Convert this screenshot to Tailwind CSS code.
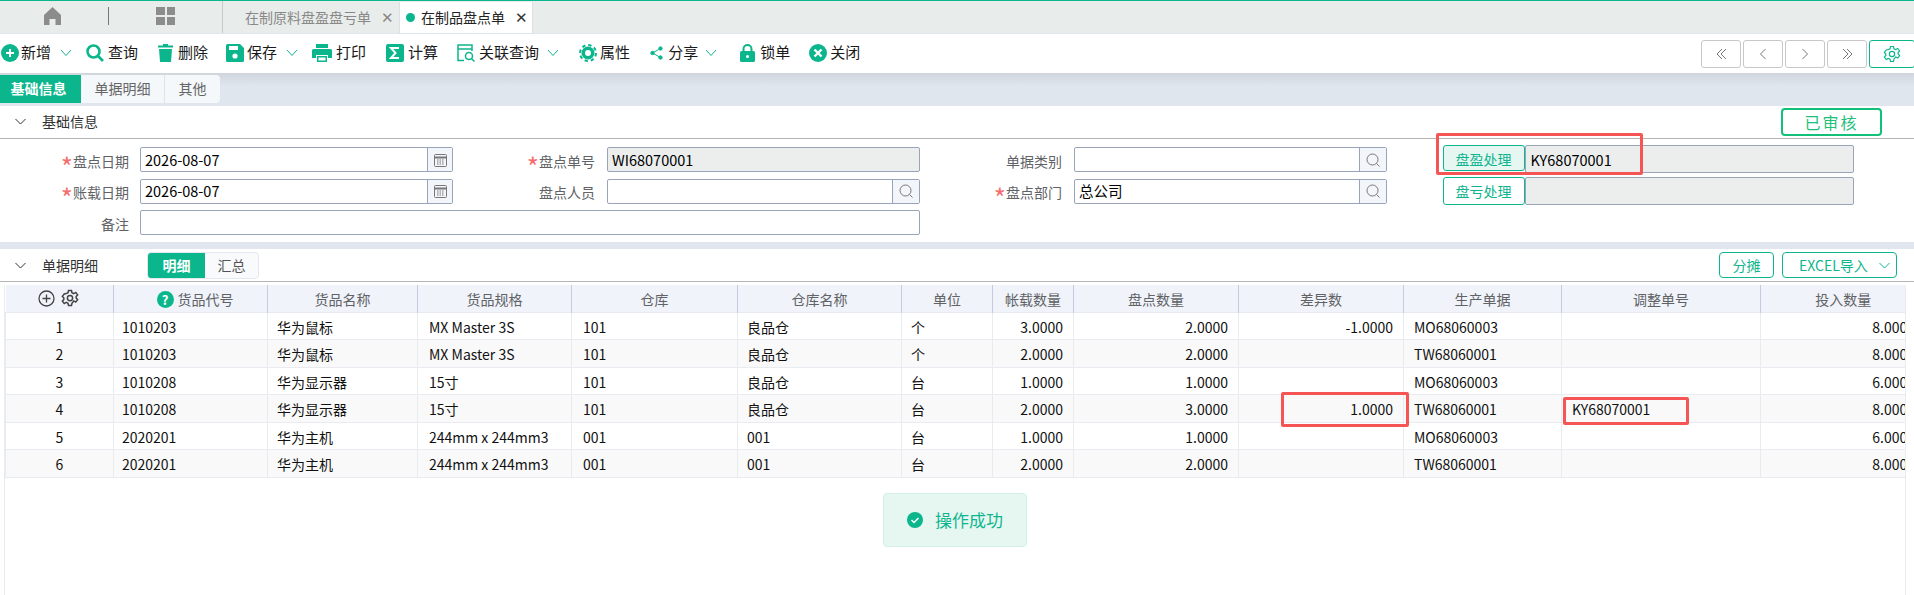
<!DOCTYPE html>
<html lang="zh">
<head>
    <meta charset="UTF-8">
    <title>在制品盘点单</title>
    <script src="https://cdn.jsdelivr.net/npm/@tailwindcss/browser@4"></script>
</head>
<body class="relative h-[595px] w-[1914px] overflow-hidden bg-white font-['Noto_Sans_CJK_SC','Noto_Sans',sans-serif] text-[14px] text-[#111]">

    <!-- 顶部页签 -->
    <div class="h-[33px] border-t border-[#0cb68c] bg-[#e8ecea] flex">
        <div class="w-[222px] flex items-center pb-[2px]">
            <svg class="ml-[44px] w-[17px] h-[18px]" viewBox="0 0 17 18" fill="#8c8c8c"><path d="M8.5 0 17 8v10h-5.500v-6h-6v6H0V8z"/></svg>
            <div class="ml-[47px] w-px h-[18px] bg-[#777]"></div>
            <div class="ml-[47px] grid grid-cols-2 gap-[2px] w-[19px] h-[18px]">
                <div class="bg-[#8c8c8c]"></div><div class="bg-[#8c8c8c]"></div><div class="bg-[#8c8c8c]"></div><div class="bg-[#8c8c8c]"></div>
            </div>
        </div>
        <div class="w-[177px] border-l border-[#c9c9c9] flex items-center pl-[22px] text-[#888]">
            <span>在制原料盘盈盘亏单</span>
            <span class="ml-[10px] text-[15px] font-light">✕</span>
        </div>
        <div class="w-[134px] mt-px bg-white border-x border-[#dcdfe6] flex items-center pl-[6px]">
            <span class="w-[9px] h-[9px] rounded-full bg-[#0cb68c]"></span>
            <span class="ml-[6px] text-[#222]">在制品盘点单</span>
            <span class="ml-[10px] text-[15px] font-light text-[#333]">✕</span>
        </div>
    </div>

    <!-- 工具栏 -->
    <div class="h-[40px] border-t border-[#dfe5ec] pb-[2px] flex items-center text-[15px] text-[#1a1a1a] relative">
        <div class="flex items-center">
            <svg class="ml-px w-[18px] h-[18px]" viewBox="0 0 18 18"><circle cx="9" cy="9" r="9" fill="#0cb68c"/><path d="M9 5v8M5 9h8" stroke="#fff" stroke-width="2"/></svg>
            <span class="ml-[2px]">新增</span>
            <svg class="ml-[9px] w-[12px] h-[8px]" viewBox="0 0 12 8" fill="none" stroke="#0cb68c"><path d="m1 1 5 5.500 5-5.500"/></svg>

            <svg class="ml-[14px] w-[18px] h-[18px]" viewBox="0 0 18 18" fill="none" stroke="#0cb68c" stroke-width="2.600"><circle cx="7.500" cy="7.500" r="6"/><path d="m12 12 5 5"/></svg>
            <span class="ml-[4px]">查询</span>

            <svg class="ml-[20px] w-[15px] h-[18px]" viewBox="0 0 15 18" fill="#0cb68c"><path d="M5 0h5v1.500h5V3.500H0V1.500h5zM1 5h13l-1 13H2z"/></svg>
            <span class="ml-[5px]">删除</span>

            <svg class="ml-[18px] w-[18px] h-[18px]" viewBox="0 0 18 18"><path fill="#0cb68c" d="M0 1.500A1.500 1.500 0 0 1 1.500 0H14l4 4v12.500a1.500 1.500 0 0 1-1.500 1.500h-15A1.500 1.500 0 0 1 0 16.500z"/><rect x="3" y="2" width="9" height="4" fill="#fff"/><circle cx="9" cy="12" r="2.600" fill="#fff"/></svg>
            <span class="ml-[3px]">保存</span>
            <svg class="ml-[9px] w-[12px] h-[8px]" viewBox="0 0 12 8" fill="none" stroke="#0cb68c"><path d="m1 1 5 5.500 5-5.500"/></svg>

            <svg class="ml-[14px] w-[20px] h-[18px]" viewBox="0 0 20 18"><path fill="#0cb68c" d="M4 0h12v4H4zM1.500 5h17A1.500 1.500 0 0 1 20 6.500V14h-4v-3H4v3H0V6.500A1.500 1.500 0 0 1 1.500 5zM5 12h10v6H5z"/><rect x="6.500" y="13.500" width="7" height="3" fill="#fff"/></svg>
            <span class="ml-[4px]">打印</span>

            <svg class="ml-[20px] w-[18px] h-[18px]" viewBox="0 0 18 18"><rect width="18" height="18" rx="2" fill="#0cb68c"/><path d="M13 4H5l4.500 5L5 14h8" fill="none" stroke="#fff" stroke-width="2"/></svg>
            <span class="ml-[4px]">计算</span>

            <svg class="ml-[19px] w-[18px] h-[18px]" viewBox="0 0 18 18" fill="none" stroke="#0cb68c" stroke-width="1.500"><path d="M7 16.500H1V1h14v6M1 5h14"/><circle cx="12" cy="12" r="3.500"/><path d="m14.500 14.500 3 3"/></svg>
            <span class="ml-[4px]">关联查询</span>
            <svg class="ml-[8px] w-[12px] h-[8px]" viewBox="0 0 12 8" fill="none" stroke="#0cb68c"><path d="m1 1 5 5.500 5-5.500"/></svg>

            <svg class="ml-[20px] w-[18px] h-[18px]" viewBox="0 0 18 18"><circle cx="9" cy="9" r="6.500" fill="#0cb68c"/><circle cx="9" cy="9" r="8" fill="none" stroke="#0cb68c" stroke-width="2" stroke-dasharray="3.400 2.880"/><circle cx="9" cy="9" r="3" fill="#fff"/></svg>
            <span class="ml-[3px]">属性</span>

            <svg class="ml-[20px] w-[13px] h-[14px]" viewBox="0 0 13 14" fill="#0cb68c" stroke="#0cb68c"><path d="M10.500 2.500 2.500 7l8 4.500" fill="none"/><circle cx="10.500" cy="2.500" r="1.700"/><circle cx="2.500" cy="7" r="1.700"/><circle cx="10.500" cy="11.500" r="1.700"/></svg>
            <span class="ml-[5px]">分享</span>
            <svg class="ml-[7px] w-[12px] h-[8px]" viewBox="0 0 12 8" fill="none" stroke="#0cb68c"><path d="m1 1 5 5.500 5-5.500"/></svg>

            <svg class="ml-[23px] w-[15px] h-[18px]" viewBox="0 0 15 18"><path d="M3.500 8V5a4 4 0 0 1 8 0v3" fill="none" stroke="#0cb68c" stroke-width="2"/><rect y="7" width="15" height="11" rx="1.500" fill="#0cb68c"/><circle cx="7.500" cy="12.500" r="1.500" fill="#fff"/></svg>
            <span class="ml-[5px]">锁单</span>

            <svg class="ml-[19px] w-[18px] h-[18px]" viewBox="0 0 18 18"><circle cx="9" cy="9" r="9" fill="#0cb68c"/><path d="m5.500 5.500 7 7m0-7-7 7" stroke="#fff" stroke-width="2.400"/></svg>
            <span class="ml-[3px]">关闭</span>
        </div>
        <div class="absolute left-[1701px] top-[6px] flex gap-[2px]">
            <div class="w-[40px] h-[28px] border border-[#c8c8c8] rounded-[3px] flex items-center justify-center"><svg class="w-[11px] h-[12px]" viewBox="0 0 11 12" fill="none" stroke="#777"><path d="M6 1 1 6l5 5M10 1 5 6l5 5"/></svg></div>
            <div class="w-[40px] h-[28px] border border-[#c8c8c8] rounded-[3px] flex items-center justify-center"><svg class="w-[6px] h-[12px]" viewBox="0 0 6 12" fill="none" stroke="#777"><path d="M5.500 1 .5 6l5 5"/></svg></div>
            <div class="w-[40px] h-[28px] border border-[#c8c8c8] rounded-[3px] flex items-center justify-center"><svg class="w-[6px] h-[12px]" viewBox="0 0 6 12" fill="none" stroke="#777"><path d="m.5 1 5 5-5 5"/></svg></div>
            <div class="w-[40px] h-[28px] border border-[#c8c8c8] rounded-[3px] flex items-center justify-center"><svg class="w-[11px] h-[12px]" viewBox="0 0 11 12" fill="none" stroke="#777"><path d="m1 1 5 5-5 5M5 1l5 5-5 5"/></svg></div>
            <div class="w-[46px] h-[28px] border border-[#0cb68c] rounded-[3px] flex items-center justify-center"><svg class="w-[18px] h-[18px]" viewBox="0 0 24 24" fill="none" stroke="#0cb68c" stroke-width="1.600"><circle cx="12" cy="12" r="3.500"/><path d="M10 2h4l.6 3 2.400 1.100 2.700-1.500 2.500 3.200-2 2.200v2l2 2.200-2.500 3.200-2.700-1.500L14.600 19 14 22h-4l-.6-3L7 17.900l-2.700 1.500-2.500-3.200 2-2.200v-2l-2-2.200 2.500-3.200L7 6.100 9.400 5z"/></svg></div>
        </div>
    </div>

    <!-- 页面页签 -->
    <div class="h-[33px] bg-gradient-to-b from-[#d0d5de] to-[#e0e6ee] to-40% pt-[2px]">
        <div class="flex h-[28px] w-[220px] rounded-r-[4px] bg-[#f5f8fb] text-[#666]">
            <div class="w-[81px] bg-[#0cb68c] text-white font-bold flex items-center justify-center pb-[2px] pr-[4px]">基础信息</div>
            <div class="w-[84px] border-r border-[#e0e4ea] flex items-center justify-center pb-[2px]">单据明细</div>
            <div class="flex-1 flex items-center justify-center pb-[2px]">其他</div>
        </div>
    </div>

    <!-- 基础信息 -->
    <div class="relative h-[33px] border-b border-[#b5b5b5] pb-[2px] flex items-center">
        <svg class="ml-[15px] w-[11px] h-[7px]" viewBox="0 0 11 7" fill="none" stroke="#333"><path d="m.5 1 5 5 5-5"/></svg>
        <span class="ml-[16px] text-[#333]">基础信息</span>
        <div class="absolute left-[1781px] top-[2px] w-[101px] h-[28px] border-2 border-[#13c07a] rounded-[4px] flex items-center justify-center text-[16px] text-[#1fc07a] tracking-[2px]">已审核</div>
    </div>

    <div class="h-[103px] pt-[8px] grid grid-cols-[140px_313px_154px_313px_154px_313px_55.500px_82px_329px] grid-rows-[25px_25px_25px] gap-y-[6.500px] text-[#606266]">
        <!-- 第一行 -->
        <div class="flex justify-end items-center pr-[11px] pt-[3px]"><span class="text-[#f56c6c] text-[26px] leading-none mt-[9px]">*</span>盘点日期</div>
        <div class="border border-[#98a4ba] rounded-[2px] flex items-center text-[14.500px] text-black"><span class="flex-1 pl-[4px]">2026-08-07</span><span class="w-[25px] h-full bg-[#f2f5fa] border-l border-[#98a4ba] flex items-center justify-center"><svg class="w-[13px] h-[14px]" viewBox="0 0 13 14" fill="none" stroke="#777"><rect x=".5" y="1.500" width="12" height="12" rx="1"/><path d="M.5 4.500h12" stroke-width="2"/><path d="M3 7h7M3 9h7M3 11h7" stroke-dasharray="1.500 1"/></svg></span></div>
        <div class="flex justify-end items-center pr-[12px] pt-[3px]"><span class="text-[#f56c6c] text-[26px] leading-none mt-[9px]">*</span>盘点单号</div>
        <div class="border border-[#98a4ba] rounded-[2px] bg-[#eceeee] flex items-center pl-[4px] text-[14.500px] text-black">WI68070001</div>
        <div class="flex justify-end items-center pr-[12px] pt-[3px]">单据类别</div>
        <div class="border border-[#98a4ba] rounded-[2px] flex justify-end"><span class="w-[27px] h-full bg-[#f2f5fa] border-l border-[#98a4ba] flex items-center justify-center"><svg class="w-[14px] h-[14px]" viewBox="0 0 14 14" fill="none" stroke="#777"><circle cx="6.500" cy="6.500" r="5.500"/><path d="m10.500 10.500 3 3"/></svg></span></div>
        <div></div>
        <div class="-mt-[2px] h-[26px] border border-[#0fb58e] rounded-[3px] bg-[#e6f7f2] text-[#0fb58e] flex items-center justify-center pt-[2px]">盘盈处理</div>
        <div class="-mt-[2px] h-[28px] border border-[#98a4ba] rounded-[2px] bg-[#eceeee] flex items-center pl-[5px] pt-[2px] text-[14.500px] text-black">KY68070001</div>

        <!-- 第二行 -->
        <div class="flex justify-end items-center pr-[11px] pt-[3px]"><span class="text-[#f56c6c] text-[26px] leading-none mt-[9px]">*</span>账载日期</div>
        <div class="border border-[#98a4ba] rounded-[2px] flex items-center text-[14.500px] text-black"><span class="flex-1 pl-[4px]">2026-08-07</span><span class="w-[25px] h-full bg-[#f2f5fa] border-l border-[#98a4ba] flex items-center justify-center"><svg class="w-[13px] h-[14px]" viewBox="0 0 13 14" fill="none" stroke="#777"><rect x=".5" y="1.500" width="12" height="12" rx="1"/><path d="M.5 4.500h12" stroke-width="2"/><path d="M3 7h7M3 9h7M3 11h7" stroke-dasharray="1.500 1"/></svg></span></div>
        <div class="flex justify-end items-center pr-[12px] pt-[3px]">盘点人员</div>
        <div class="border border-[#98a4ba] rounded-[2px] flex justify-end"><span class="w-[27px] h-full bg-[#f2f5fa] border-l border-[#98a4ba] flex items-center justify-center"><svg class="w-[14px] h-[14px]" viewBox="0 0 14 14" fill="none" stroke="#777"><circle cx="6.500" cy="6.500" r="5.500"/><path d="m10.500 10.500 3 3"/></svg></span></div>
        <div class="flex justify-end items-center pr-[12px] pt-[3px]"><span class="text-[#f56c6c] text-[26px] leading-none mt-[9px]">*</span>盘点部门</div>
        <div class="border border-[#98a4ba] rounded-[2px] flex items-center text-[14.500px] text-black"><span class="flex-1 pl-[4px]">总公司</span><span class="w-[27px] h-full bg-[#f2f5fa] border-l border-[#98a4ba] flex items-center justify-center"><svg class="w-[14px] h-[14px]" viewBox="0 0 14 14" fill="none" stroke="#777"><circle cx="6.500" cy="6.500" r="5.500"/><path d="m10.500 10.500 3 3"/></svg></span></div>
        <div></div>
        <div class="-mt-[2px] h-[28px] border border-[#0fb58e] rounded-[3px] text-[#0fb58e] flex items-center justify-center pt-[2px]">盘亏处理</div>
        <div class="-mt-[2px] h-[28px] border border-[#98a4ba] rounded-[2px] bg-[#eceeee]"></div>

        <!-- 第三行 -->
        <div class="flex justify-end items-center pr-[11px] pt-[3px]">备注</div>
        <div class="col-span-3 border border-[#98a4ba] rounded-[2px]"></div>
    </div>

    <div class="h-[7px] bg-[#e2e7ef]"></div>

    <!-- 单据明细 -->
    <div class="relative h-[33px] border-b border-[#b5b5b5] flex items-center">
        <svg class="ml-[15px] w-[11px] h-[7px]" viewBox="0 0 11 7" fill="none" stroke="#333"><path d="m.5 1 5 5 5-5"/></svg>
        <span class="ml-[16px] text-[#333]">单据明细</span>
        <div class="ml-[49px] flex h-[27px] w-[112px] border border-[#e3e8ee] rounded-[4px] overflow-hidden bg-[#f8fafc] text-[#555]">
            <div class="w-[57px] bg-[#0cb68c] text-white font-bold flex items-center justify-center">明细</div>
            <div class="flex-1 flex items-center justify-center">汇总</div>
        </div>
        <div class="absolute left-[1719px] top-[3px] w-[55px] h-[26px] border border-[#0fb58e] rounded-[4px] text-[#0fb58e] flex items-center justify-center">分摊</div>
        <div class="absolute left-[1782px] top-[3px] w-[115px] h-[26px] border border-[#0fb58e] rounded-[4px] text-[#0fb58e] flex items-center pl-[16px]">EXCEL导入<svg class="ml-[11px] w-[11px] h-[7px]" viewBox="0 0 11 7" fill="none" stroke="#0fb58e"><path d="m.5 1 5 5 5-5"/></svg></div>
    </div>

    <!-- 明细表格 -->
    <div class="mt-[3px] ml-[4px] w-[1902px] h-[310px] border-x border-[#e8ebf0] overflow-hidden">
        <table class="table-fixed w-[1920px] border-collapse">
            <colgroup>
                <col class="w-[108px]"><col class="w-[154px]"><col class="w-[150px]"><col class="w-[154px]"><col class="w-[166px]"><col class="w-[164px]"><col class="w-[91px]"><col class="w-[81px]"><col class="w-[165px]"><col class="w-[165px]"><col class="w-[158px]"><col class="w-[199px]"><col class="w-[165px]">
            </colgroup>
            <thead>
                <tr class="h-[27px] bg-[#f0f3f9] text-[#606266] font-normal">
                    <th class="font-normal border-r border-[#c5cbdc]"><div class="flex justify-center items-center gap-[6px] pr-[2px]">
                        <svg class="w-[17px] h-[17px]" viewBox="0 0 17 17" fill="none" stroke="#444" stroke-width="1.300"><circle cx="8.500" cy="8.500" r="7.500"/><path d="M8.500 4.500v8M4.500 8.500h8"/></svg>
                        <svg class="w-[18px] h-[18px]" viewBox="0 0 24 24" fill="none" stroke="#444" stroke-width="2"><circle cx="12" cy="12" r="3.500"/><path d="M10 2h4l.6 3 2.400 1.100 2.700-1.500 2.500 3.200-2 2.200v2l2 2.200-2.500 3.200-2.700-1.500L14.600 19 14 22h-4l-.6-3L7 17.900l-2.700 1.500-2.500-3.200 2-2.200v-2l-2-2.200 2.500-3.200L7 6.100 9.400 5z"/></svg>
                    </div></th>
                    <th class="font-normal border-r border-[#c5cbdc] pt-[2px]"><div class="flex justify-center items-center gap-[4px] pl-[9px]"><span class="w-[17px] h-[17px] shrink-0 rounded-full bg-[#0cb68c] text-white text-[13px] font-bold leading-[17px]">?</span>货品代号</div></th>
                    <th class="font-normal border-r border-[#c5cbdc] pt-[2px]">货品名称</th>
                    <th class="font-normal border-r border-[#c5cbdc] pt-[2px]">货品规格</th>
                    <th class="font-normal border-r border-[#c5cbdc] pt-[2px]">仓库</th>
                    <th class="font-normal border-r border-[#c5cbdc] pt-[2px]">仓库名称</th>
                    <th class="font-normal border-r border-[#c5cbdc] pt-[2px]">单位</th>
                    <th class="font-normal border-r border-[#c5cbdc] pt-[2px]">帐载数量</th>
                    <th class="font-normal border-r border-[#c5cbdc] pt-[2px]">盘点数量</th>
                    <th class="font-normal border-r border-[#c5cbdc] pt-[2px]">差异数</th>
                    <th class="font-normal border-r border-[#c5cbdc] pt-[2px]">生产单据</th>
                    <th class="font-normal border-r border-[#c5cbdc] pt-[2px]">调整单号</th>
                    <th class="font-normal pt-[2px]">投入数量</th>
                </tr>
            </thead>
            <tbody id="detailRows" class="[&_td]:border [&_td]:border-[#e8ebf0] [&_td]:px-[10px] [&_td]:pt-[3px] [&_td]:whitespace-nowrap [&_td]:overflow-hidden">
                <tr class="h-[27.500px]"><td class="text-center">1</td><td class="pl-[8px]!">1010203</td><td class="pl-[9px]!">华为鼠标</td><td class="pl-[11px]!">MX Master 3S</td><td class="pl-[11px]!">101</td><td class="pl-[9px]!">良品仓</td><td class="pl-[9px]!">个</td><td class="text-right">3.0000</td><td class="text-right">2.0000</td><td class="text-right">-1.0000</td><td>MO68060003</td><td></td><td class="text-right">8.0000</td></tr>
                <tr class="h-[27.500px] bg-[#f9f9f9]"><td class="text-center">2</td><td class="pl-[8px]!">1010203</td><td class="pl-[9px]!">华为鼠标</td><td class="pl-[11px]!">MX Master 3S</td><td class="pl-[11px]!">101</td><td class="pl-[9px]!">良品仓</td><td class="pl-[9px]!">个</td><td class="text-right">2.0000</td><td class="text-right">2.0000</td><td></td><td>TW68060001</td><td></td><td class="text-right">8.0000</td></tr>
                <tr class="h-[27.500px]"><td class="text-center">3</td><td class="pl-[8px]!">1010208</td><td class="pl-[9px]!">华为显示器</td><td class="pl-[11px]!">15寸</td><td class="pl-[11px]!">101</td><td class="pl-[9px]!">良品仓</td><td class="pl-[9px]!">台</td><td class="text-right">1.0000</td><td class="text-right">1.0000</td><td></td><td>MO68060003</td><td></td><td class="text-right">6.0000</td></tr>
                <tr class="h-[27.500px] bg-[#f9f9f9]"><td class="text-center">4</td><td class="pl-[8px]!">1010208</td><td class="pl-[9px]!">华为显示器</td><td class="pl-[11px]!">15寸</td><td class="pl-[11px]!">101</td><td class="pl-[9px]!">良品仓</td><td class="pl-[9px]!">台</td><td class="text-right">2.0000</td><td class="text-right">3.0000</td><td class="text-right">1.0000</td><td>TW68060001</td><td>KY68070001</td><td class="text-right">8.0000</td></tr>
                <tr class="h-[27.500px]"><td class="text-center">5</td><td class="pl-[8px]!">2020201</td><td class="pl-[9px]!">华为主机</td><td class="pl-[11px]!">244mm x 244mm3</td><td class="pl-[11px]!">001</td><td class="pl-[9px]!">001</td><td class="pl-[9px]!">台</td><td class="text-right">1.0000</td><td class="text-right">1.0000</td><td></td><td>MO68060003</td><td></td><td class="text-right">6.0000</td></tr>
                <tr class="h-[27.500px] bg-[#f9f9f9]"><td class="text-center">6</td><td class="pl-[8px]!">2020201</td><td class="pl-[9px]!">华为主机</td><td class="pl-[11px]!">244mm x 244mm3</td><td class="pl-[11px]!">001</td><td class="pl-[9px]!">001</td><td class="pl-[9px]!">台</td><td class="text-right">2.0000</td><td class="text-right">2.0000</td><td></td><td>TW68060001</td><td></td><td class="text-right">8.0000</td></tr>
            </tbody>
        </table>
    </div>

    <!-- 红框标注 -->
    <div class="absolute left-[1436px] top-[133px] w-[207px] h-[42px] border-[3px] border-[#f55555] rounded-[2px]"></div>
    <div class="absolute left-[1281px] top-[392px] w-[128px] h-[35px] border-[3px] border-[#f55555] rounded-[2px]"></div>
    <div class="absolute left-[1563px] top-[397px] w-[126px] h-[28px] border-[3px] border-[#f55555] rounded-[2px]"></div>

    <!-- 提示 -->
    <div class="absolute left-[883px] top-[493px] w-[144px] h-[54px] bg-[#e6f7f2] border border-[#d3f0e8] rounded-[4px] flex items-center justify-center gap-[12px] text-[#0fb58e] text-[17px]">
        <svg class="w-[16px] h-[16px]" viewBox="0 0 16 16"><circle cx="8" cy="8" r="8" fill="#0cb68c"/><path d="m4.500 8 2.500 2.500 4.500-4.500" fill="none" stroke="#fff" stroke-width="1.500"/></svg>
        操作成功
    </div>
</body>
</html>
